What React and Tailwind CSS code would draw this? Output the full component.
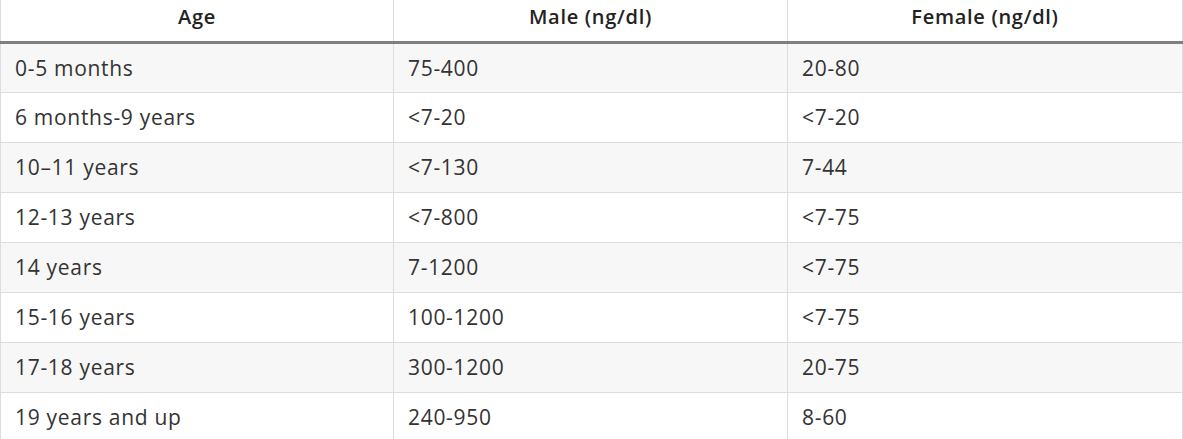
const rows = [
  ['0-5 months', '75-400', '20-80'],
  ['6 months-9 years', '<7-20', '<7-20'],
  ['10–11 years', '<7-130', '7-44'],
  ['12-13 years', '<7-800', '<7-75'],
  ['14 years', '7-1200', '<7-75'],
  ['15-16 years', '100-1200', '<7-75'],
  ['17-18 years', '300-1200', '20-75'],
  ['19 years and up', '240-950', '8-60'],
];

export default function App() {
  return (
    <div className="bg-white font-['Open_Sans','Liberation_Sans',sans-serif]">
      <table className="w-[1182px] border-collapse table-fixed">
        <colgroup>
          <col className="w-[393px]" />
          <col className="w-[394px]" />
          <col className="w-[395px]" />
        </colgroup>
        <thead>
          <tr className="h-[42px]">
            {['Age', 'Male (ng/dl)', 'Female (ng/dl)'].map(h => (
              <th key={h}
                className="border-x border-[#dddddd] border-b-[3px] border-b-[#808080] text-center align-top pt-[2px] text-[20px] font-semibold tracking-[0.7px] text-[#222222]">
                {h}
              </th>
            ))}
          </tr>
        </thead>
        <tbody>
          {rows.map((r, i) => (
            <tr key={i} className={i % 2 === 0 ? 'bg-[#f7f7f7] h-[50px]' : 'bg-white h-[50px]'}>
              {r.map((c, j) => (
                <td key={j} className="border border-[#dddddd] px-[14px] pt-[2px] text-[21px] tracking-[0.7px] text-[#333333] align-middle">
                  {c}
                </td>
              ))}
            </tr>
          ))}
        </tbody>
      </table>
    </div>
  );
}
